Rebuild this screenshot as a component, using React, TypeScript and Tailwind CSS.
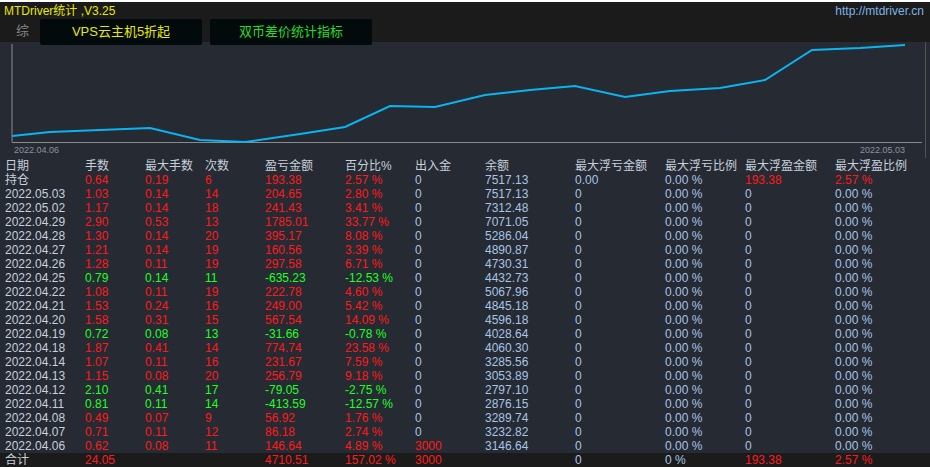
import React from 'react';

type Row = [string, string, string, string, string, string, string, string, string, string, string, string];

const R = 'text-[#ff1a1a]';
const G = 'text-[#22ff22]';
const B = 'text-[#a8c4e6]';

const rows: Row[] = [
  ['持仓', '0.64', '0.19', '6', '193.38', '2.57 %', '0', '7517.13', '0.00', '0.00 %', '193.38', '2.57 %'],
  ['2022.05.03', '1.03', '0.14', '14', '204.65', '2.80 %', '0', '7517.13', '0', '0.00 %', '0', '0.00 %'],
  ['2022.05.02', '1.17', '0.14', '18', '241.43', '3.41 %', '0', '7312.48', '0', '0.00 %', '0', '0.00 %'],
  ['2022.04.29', '2.90', '0.53', '13', '1785.01', '33.77 %', '0', '7071.05', '0', '0.00 %', '0', '0.00 %'],
  ['2022.04.28', '1.30', '0.14', '20', '395.17', '8.08 %', '0', '5286.04', '0', '0.00 %', '0', '0.00 %'],
  ['2022.04.27', '1.21', '0.14', '19', '160.56', '3.39 %', '0', '4890.87', '0', '0.00 %', '0', '0.00 %'],
  ['2022.04.26', '1.28', '0.11', '19', '297.58', '6.71 %', '0', '4730.31', '0', '0.00 %', '0', '0.00 %'],
  ['2022.04.25', '0.79', '0.14', '11', '-635.23', '-12.53 %', '0', '4432.73', '0', '0.00 %', '0', '0.00 %'],
  ['2022.04.22', '1.08', '0.11', '19', '222.78', '4.60 %', '0', '5067.96', '0', '0.00 %', '0', '0.00 %'],
  ['2022.04.21', '1.53', '0.24', '16', '249.00', '5.42 %', '0', '4845.18', '0', '0.00 %', '0', '0.00 %'],
  ['2022.04.20', '1.58', '0.31', '15', '567.54', '14.09 %', '0', '4596.18', '0', '0.00 %', '0', '0.00 %'],
  ['2022.04.19', '0.72', '0.08', '13', '-31.66', '-0.78 %', '0', '4028.64', '0', '0.00 %', '0', '0.00 %'],
  ['2022.04.18', '1.87', '0.41', '14', '774.74', '23.58 %', '0', '4060.30', '0', '0.00 %', '0', '0.00 %'],
  ['2022.04.14', '1.07', '0.11', '16', '231.67', '7.59 %', '0', '3285.56', '0', '0.00 %', '0', '0.00 %'],
  ['2022.04.13', '1.15', '0.08', '20', '256.79', '9.18 %', '0', '3053.89', '0', '0.00 %', '0', '0.00 %'],
  ['2022.04.12', '2.10', '0.41', '17', '-79.05', '-2.75 %', '0', '2797.10', '0', '0.00 %', '0', '0.00 %'],
  ['2022.04.11', '0.81', '0.11', '14', '-413.59', '-12.57 %', '0', '2876.15', '0', '0.00 %', '0', '0.00 %'],
  ['2022.04.08', '0.49', '0.07', '9', '56.92', '1.76 %', '0', '3289.74', '0', '0.00 %', '0', '0.00 %'],
  ['2022.04.07', '0.71', '0.11', '12', '86.18', '2.74 %', '0', '3232.82', '0', '0.00 %', '0', '0.00 %'],
  ['2022.04.06', '0.62', '0.08', '11', '146.64', '4.89 %', '3000', '3146.64', '0', '0.00 %', '0', '0.00 %'],
];

const widths = ['w-[80px]', 'w-[60px]', 'w-[60px]', 'w-[60px]', 'w-[80px]', 'w-[70px]', 'w-[70px]', 'w-[90px]', 'w-[90px]', 'w-[80px]', 'w-[90px]', 'w-[90px]'];
const headers = ['日期', '手数', '最大手数', '次数', '盈亏金额', '百分比%', '出入金', '余额', '最大浮亏金额', '最大浮亏比例', '最大浮盈金额', '最大浮盈比例'];

const pts = '12,136 50,132 100,130 150,128 200,140 245,142 300,134 345,127 390,106 435,107 485,95 530,90 575,86 625,97 670,91 720,88 765,80 812,50 860,48 905,45';

const cellColor = (r: Row, i: number, first: boolean) => {
  if (i === 0) return 'text-[#c8d0dc]';
  if (i >= 1 && i <= 5) return r[4].startsWith('-') ? G : R;
  if (i === 6) return r[6] === '0' ? B : R;
  if (first && (i === 10 || i === 11)) return R;
  return B;
};

export default function App() {
  return (
    <div className="w-[930px] h-[467px] bg-[#252a33] overflow-hidden relative text-[12px] leading-[14px]" style={{ fontFamily: '"Liberation Sans", "Noto Sans CJK SC", sans-serif' }}>
      <div className="h-[42px] bg-[#1b1b1b] border-t-2 border-white relative">
        <div className="flex justify-between px-[4px] pt-[2px]">
          <span className="text-[#e8e800]">MTDriver统计 ,V3.25</span>
          <span className="text-[#7fb4e6] pr-[2px]">http://mtdriver.cn</span>
        </div>
        <div className="flex items-center gap-2 pl-[16px] pt-[6px] text-[#888] text-[13px]">
          <span>综</span>
        </div>
        <div className="absolute left-[40px] top-[17px] w-[162px] h-[26px] bg-[#020a0c] rounded-[2px] flex items-center justify-center text-[#e8e800] text-[13px]">VPS云主机5折起</div>
        <div className="absolute left-[210px] top-[17px] w-[162px] h-[26px] bg-[#020a0c] rounded-[2px] flex items-center justify-center text-[#22dd22] text-[13px]">双币差价统计指标</div>
      </div>
      <div className="h-[116px] relative">
        <svg width="930" height="116" viewBox="0 42 930 116" className="absolute left-0 top-0">
          <line x1="12" y1="44" x2="12" y2="142" stroke="#8a8a8a" />
          <line x1="12" y1="142.5" x2="922" y2="142.5" stroke="#8a8a8a" />
          <line x1="925.5" y1="42" x2="925.5" y2="158" stroke="#555" />
          <polyline points={pts} fill="none" stroke="#0ab4f0" strokeWidth="2" />
          <text x="14" y="153" fill="#8a94a0" fontSize="9">2022.04.06</text>
          <text x="860" y="153" fill="#8a94a0" fontSize="9">2022.05.03</text>
        </svg>
      </div>
      <div className="pl-[5px] pt-[1px]">
        <div className="flex text-[#c8d0dc] h-[14px]">
          {headers.map((h, i) => <div key={i} className={widths[i]}>{h}</div>)}
        </div>
        {rows.map((r, ri) => (
          <div key={ri} className="flex h-[14px]">
            {r.map((c, i) => <div key={i} className={`${widths[i]} ${cellColor(r, i, ri === 0)}`}>{c}</div>)}
          </div>
        ))}
      </div>
      <div className="absolute left-0 bottom-0 w-full h-[14px] bg-[#1b1b1b] flex pl-[5px] text-[#ff1a1a]">
        <div className="w-[80px] text-[#c8d0dc]">合计</div>
        <div className="w-[60px]">24.05</div>
        <div className="w-[60px]"></div>
        <div className="w-[60px]"></div>
        <div className="w-[80px]">4710.51</div>
        <div className="w-[70px]">157.02 %</div>
        <div className="w-[70px]">3000</div>
        <div className="w-[90px]"></div>
        <div className={`w-[90px] ${B}`}>0</div>
        <div className={`w-[80px] ${B}`}>0 %</div>
        <div className="w-[90px]">193.38</div>
        <div className="w-[90px]">2.57 %</div>
      </div>
    </div>
  );
}
